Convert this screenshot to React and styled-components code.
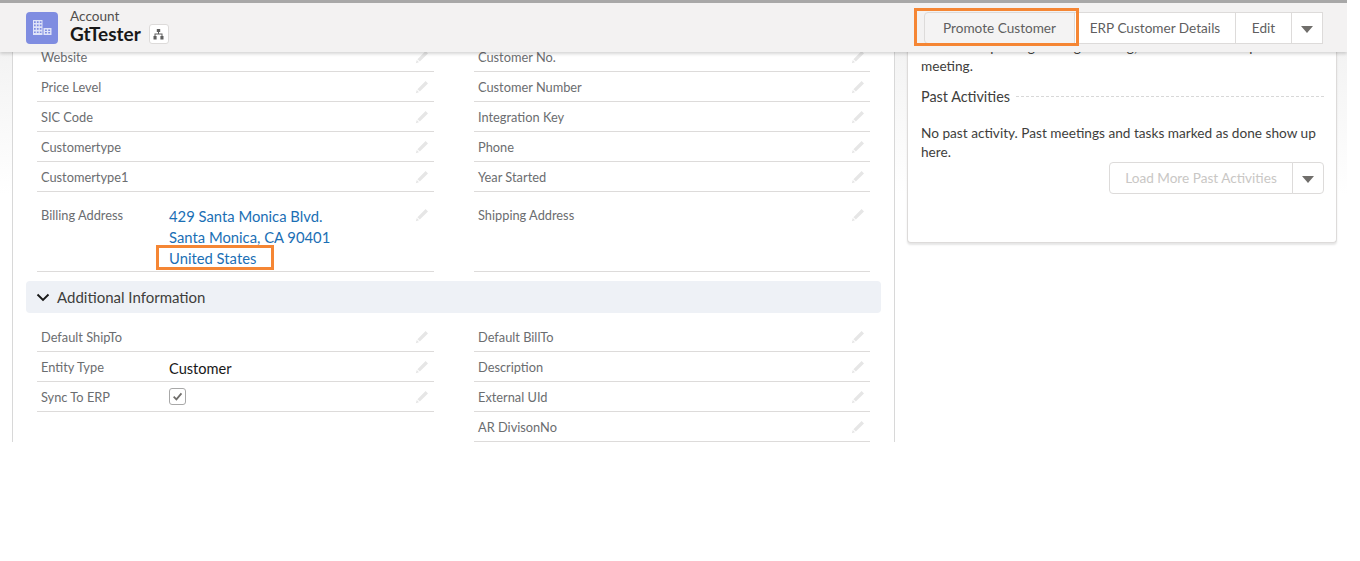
import styled, { createGlobalStyle } from "styled-components";

const Global = createGlobalStyle`
  html, body { margin: 0; padding: 0; background: #fff; }
  body { font-family: Lato, "Open Sans", "Liberation Sans", sans-serif; color: #3e3e3c; }
  * { box-sizing: border-box; }
`;

const Page = styled.div`
  width: 1347px;
  height: 442px;
  overflow: hidden;
  background: linear-gradient(#f2f2f2 40px, #fff 195px);
`;

const Header = styled.header`
  position: relative;
  z-index: 2;
  height: 52px;
  border-top: 3px solid #a8a8a8;
  background: #f3f2f2;
  box-shadow: 0 2px 3px rgba(0, 0, 0, 0.16);
  display: flex;
  align-items: center;
  justify-content: space-between;
  padding: 0 24px 0 26px;
`;

const Identity = styled.div`
  display: flex;
  align-items: center;
  gap: 12px;
`;

const EntityIcon = styled.div`
  width: 32px;
  height: 32px;
  border-radius: 4px;
  background: #7f8de1;
  display: flex;
  align-items: center;
  justify-content: center;
`;

const EntityText = styled.div`
  display: flex;
  flex-direction: column;
  margin-top: -2px;
`;

const EntityLabel = styled.span`
  font-size: 13.6px;
  line-height: 15px;
  color: #514f4d;
`;

const TitleRow = styled.div`
  display: flex;
  align-items: center;
  gap: 8px;
`;

const Title = styled.span`
  font-size: 19px;
  line-height: 20px;
  font-weight: 700;
  color: #181818;
`;

const Hierarchy = styled.span`
  width: 20px;
  height: 20px;
  border: 1px solid #dddbda;
  border-radius: 3px;
  background: #fff;
  display: flex;
  align-items: center;
  justify-content: center;
`;

const ButtonGroup = styled.div`
  display: flex;
  height: 32px;
  position: relative;
`;

const GroupButton = styled.div`
  height: 32px;
  display: flex;
  align-items: center;
  justify-content: center;
  width: ${(p) => p.$w}px;
  font-size: 13.6px;
  white-space: nowrap;
  border: 1px solid #dddbda;
  margin-left: -1px;
  color: ${(p) => (p.$off ? "#c9c7c5" : "#5f5f5f")};
  background: ${(p) => (p.$active ? "#f4f3f3" : "#fff")};
  &:first-child {
    margin-left: 0;
    border-radius: 4px 0 0 4px;
  }
  &:last-child {
    border-radius: 0 4px 4px 0;
  }
`;

const Caret = styled.span`
  width: 0;
  height: 0;
  border-left: 6px solid transparent;
  border-right: 6px solid transparent;
  border-top: 7px solid #706e6b;
  margin-top: 3px;
`;

const Highlight = styled.div`
  position: absolute;
  left: ${(p) => p.$l}px;
  top: ${(p) => p.$t}px;
  width: ${(p) => p.$w}px;
  height: ${(p) => p.$h}px;
  border: 3px solid #f58634;
  pointer-events: none;
`;

const Body = styled.div`
  display: flex;
  align-items: flex-start;
  margin-top: -10px;
  padding: 0 10px 0 12px;
  gap: 12px;
`;

const MainCard = styled.main`
  width: 884px;
  height: 400px;
  background: #fff;
  border-left: 1px solid #d8d8d8;
  border-right: 1px solid #d8d8d8;
  padding: 0 13px 0 13px;
`;

const Columns = styled.div`
  display: grid;
  grid-template-columns: 397px 396px;
  column-gap: 40px;
  padding: 0 11px 0 11px;
`;

const Column = styled.div`
  display: flex;
  flex-direction: column;
`;

const Row = styled.div`
  height: ${(p) => (p.$tall ? 80 : 30)}px;
  border-bottom: 1px solid #dddbda;
  display: flex;
  align-items: flex-start;
  padding: ${(p) => (p.$tall ? 15 : 7)}px 5px 0 4px;
`;

const Label = styled.span`
  width: 128px;
  flex: none;
  font-size: 12.8px;
  line-height: 16px;
  color: #6b6d70;
`;

const Value = styled.span`
  flex: 1;
  font-size: 14.6px;
  line-height: 21px;
  margin-top: -1px;
  color: #181818;
`;

const AddressLink = styled.a`
  display: block;
  color: #1b6fb5;
`;

const AddressWrap = styled.span`
  position: relative;
  flex: 1;
  font-size: 14.8px;
  line-height: 21px;
  margin-top: -1px;
`;

const PencilIcon = styled.svg`
  width: 14px;
  height: 14px;
  flex: none;
  fill: #e6e6e6;
  margin-top: 1px;
`;

const CheckBox = styled.span`
  width: 17px;
  height: 17px;
  border: 1px solid #a8a8a8;
  border-radius: 3px;
  display: flex;
  align-items: center;
  justify-content: center;
  background: #fff;
`;

const SectionBar = styled.div`
  height: 32px;
  margin: 9px 0 9px 0;
  padding: 0 0 1px 10px;
  background: #eef1f6;
  border-radius: 4px;
  display: flex;
  align-items: center;
  gap: 7px;
  font-size: 15px;
  color: #3e3e3c;
`;

const SideCard = styled.aside`
  width: 431px;
  height: 205px;
  margin: -4px 0 0 0;
  background: #fff;
  border: 1px solid #dddbda;
  border-top: none;
  border-radius: 0 0 4px 4px;
  box-shadow: 0 2px 2px rgba(0, 0, 0, 0.1);
  padding: 0 12px 0 13px;
`;

const SideText = styled.p`
  margin: 0;
  font-size: 13.65px;
  line-height: 19px;
  color: #3e3e3c;
`;

const PastHead = styled.div`
  display: flex;
  align-items: center;
  gap: 6px;
  height: 20px;
  margin: 10px 0 18px;
  font-size: 14.4px;
  color: #3e3e3c;
  &::after {
    content: "";
    flex: 1;
    border-top: 1px dashed #d8d8d8;
  }
`;

const LoadRow = styled.div`
  display: flex;
  justify-content: flex-end;
`;

const Pencil = () => (
  <PencilIcon viewBox="0 0 14 14">
    <path d="M10.6 1 13 3.4 4.8 11.6 2.4 9.2zM1.8 10l2.2 2.2-3.2 1z" />
  </PencilIcon>
);

const left = ["Website", "Price Level", "SIC Code", "Customertype", "Customertype1"];
const right = ["Customer No.", "Customer Number", "Integration Key", "Phone", "Year Started"];

const App = () => (
  <>
    <Global />
    <Page>
      <Header>
        <Identity>
          <EntityIcon>
            <svg width="22" height="22" viewBox="0 0 22 22" fill="#e0e4f8">
              <path d="M2 3h9.5v15H2zM12.5 11h8v7h-8z" />
              <path
                fill="#7f8de1"
                d="M3 4.2h1.7v1.7H3zM5.9 4.2h1.7v1.7H5.9zM8.8 4.2h1.7v1.7H8.8zM3 7.6h1.7v1.7H3zM5.9 7.6h1.7v1.7H5.9zM8.8 7.6h1.7v1.7H8.8zM3 11h1.7v1.7H3zM5.9 11h1.7v1.7H5.9zM8.8 11h1.7v1.7H8.8zM3 14.4h1.7v1.7H3zM5.9 14.4h1.7v1.7H5.9zM8.8 14.4h1.7v1.7H8.8zM14 12.5h1.9v1.6H14zM17.2 12.5h1.9v1.6h-1.9zM14 15h1.9v1.6H14zM17.2 15h1.9v1.6h-1.9z"
              />
            </svg>
          </EntityIcon>
          <EntityText>
            <EntityLabel>Account</EntityLabel>
            <TitleRow>
              <Title>GtTester</Title>
              <Hierarchy>
                <svg width="11" height="11" viewBox="0 0 11 11" fill="#5f5f5f">
                  <path d="M3.8 0h3.4v3H6v1.6h3.5V7h1v3.4H7.4V7h1.1V5.6h-6V7h1.1v3.4H.5V7h1V4.6H5V3H3.8z" />
                </svg>
              </Hierarchy>
            </TitleRow>
          </EntityText>
        </Identity>
        <ButtonGroup>
          <GroupButton $w={151} $active>Promote Customer</GroupButton>
          <GroupButton $w={162}>ERP Customer Details</GroupButton>
          <GroupButton $w={57}>Edit</GroupButton>
          <GroupButton $w={32}><Caret /></GroupButton>
          <Highlight $l={-10} $t={-4} $w={165} $h={38} />
        </ButtonGroup>
      </Header>
      <Body>
        <MainCard>
          <Columns>
            <Column>
              {left.map((name) => (
                <Row key={name}>
                  <Label>{name}</Label>
                  <Value />
                  <Pencil />
                </Row>
              ))}
              <Row $tall>
                <Label>Billing Address</Label>
                <AddressWrap>
                  <AddressLink>429 Santa Monica Blvd.</AddressLink>
                  <AddressLink>Santa Monica, CA 90401</AddressLink>
                  <AddressLink>United States</AddressLink>
                  <Highlight $l={-13} $t={39} $w={118} $h={25} />
                </AddressWrap>
                <Pencil />
              </Row>
            </Column>
            <Column>
              {right.map((name) => (
                <Row key={name}>
                  <Label>{name}</Label>
                  <Value />
                  <Pencil />
                </Row>
              ))}
              <Row $tall>
                <Label>Shipping Address</Label>
                <Value />
                <Pencil />
              </Row>
            </Column>
          </Columns>
          <SectionBar>
            <svg width="14" height="14" viewBox="0 0 14 14" fill="none" stroke="#181818" strokeWidth="1.9">
              <path d="M1.5 4.5 7 10l5.5-5.5" />
            </svg>
            Additional Information
          </SectionBar>
          <Columns>
            <Column>
              <Row>
                <Label>Default ShipTo</Label>
                <Value />
                <Pencil />
              </Row>
              <Row>
                <Label>Entity Type</Label>
                <Value>Customer</Value>
                <Pencil />
              </Row>
              <Row>
                <Label>Sync To ERP</Label>
                <Value>
                  <CheckBox>
                    <svg width="11" height="11" viewBox="0 0 10 10" fill="none" stroke="#706e6b" strokeWidth="1.6">
                      <path d="M1.5 5.2 4 7.6 8.6 2.2" />
                    </svg>
                  </CheckBox>
                </Value>
                <Pencil />
              </Row>
            </Column>
            <Column>
              {["Default BillTo", "Description", "External UId", "AR DivisonNo"].map((name) => (
                <Row key={name}>
                  <Label>{name}</Label>
                  <Value />
                  <Pencil />
                </Row>
              ))}
            </Column>
          </Columns>
        </MainCard>
        <SideCard>
          <SideText>
            No next steps. To get things moving, add a task or set up a
            <br />
            meeting.
          </SideText>
          <PastHead>Past Activities</PastHead>
          <SideText>No past activity. Past meetings and tasks marked as done show up here.</SideText>
          <LoadRow>
            <ButtonGroup>
              <GroupButton $w={184} $off>Load More Past Activities</GroupButton>
              <GroupButton $w={32}><Caret /></GroupButton>
            </ButtonGroup>
          </LoadRow>
        </SideCard>
      </Body>
    </Page>
  </>
);

export default App;
